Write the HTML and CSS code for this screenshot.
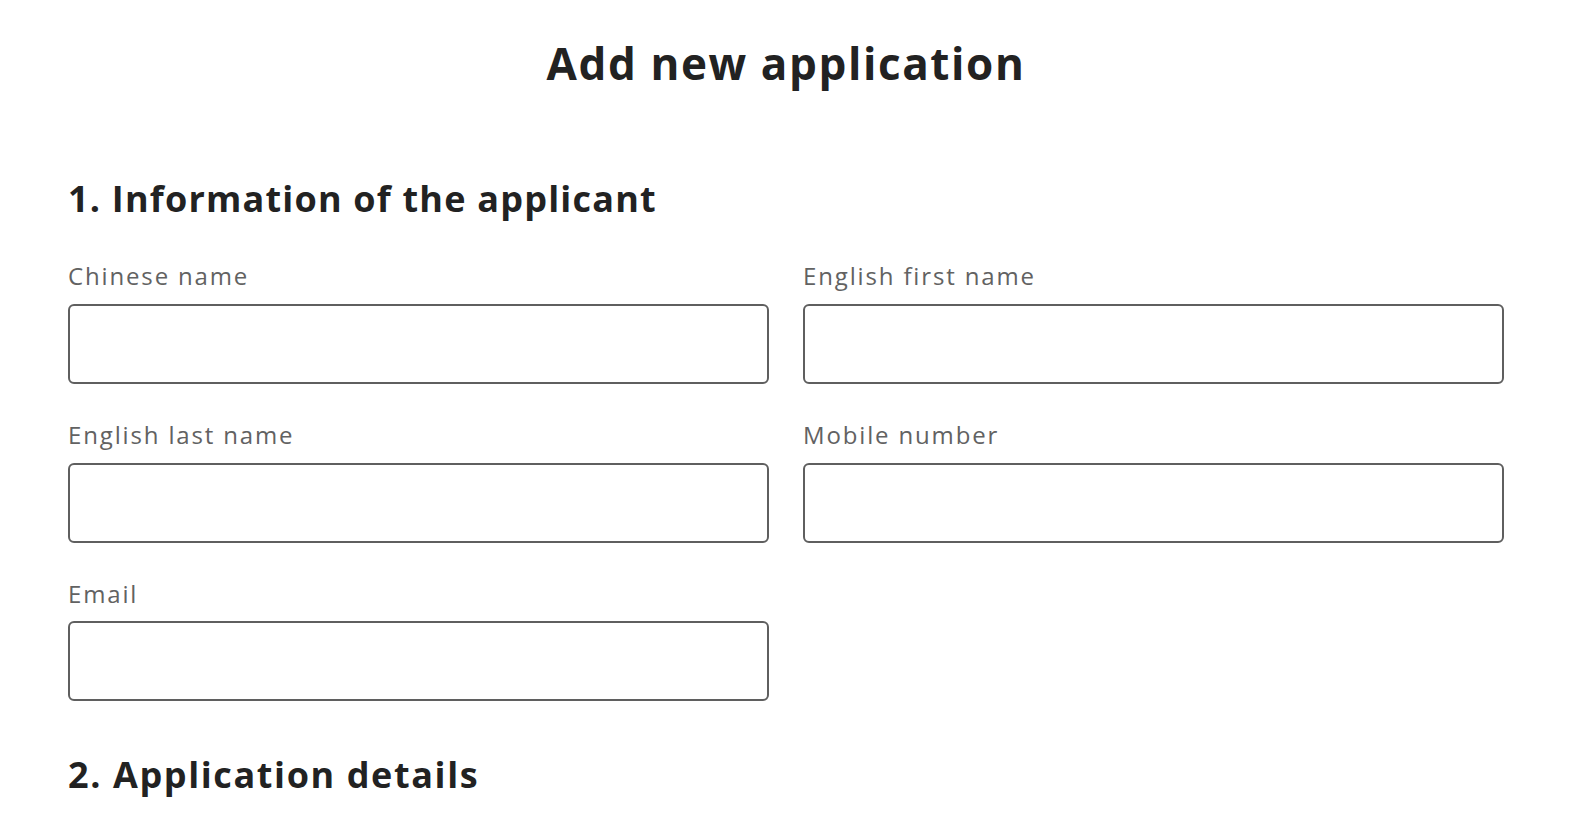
FILE: index.html
```html
<!DOCTYPE html>
<html lang="en">
<head>
    <meta charset="UTF-8">
    <meta name="viewport" content="width=device-width, initial-scale=1.0">
    <title>Add new application</title>
    <link rel="stylesheet" href="styles.css">
</head>
<body>
    <div class="page">
        <h1>Add new application</h1>
        <form id="applicationForm" action="" method="POST">
            <h2>1. Information of the applicant</h2>
            <div class="field-grid">
                <div class="field">
                    <label for="chineseName">Chinese name</label>
                    <input type="text" name="chineseName" id="chineseName">
                </div>
                <div class="field">
                    <label for="firstName">English first name</label>
                    <input type="text" name="firstName" id="firstName">
                </div>
                <div class="field">
                    <label for="lastName">English last name</label>
                    <input type="text" name="lastName" id="lastName">
                </div>
                <div class="field">
                    <label for="mobile">Mobile number</label>
                    <input type="tel" name="mobile" id="mobile">
                </div>
                <div class="field">
                    <label for="email">Email</label>
                    <input type="email" name="email" id="email">
                </div>
            </div>
            <h2 class="next-section">2. Application details</h2>
        </form>
    </div>
</body>
</html>
```

FILE: styles.css
```css
body {
    font-family: "Open Sans", "Noto Sans", sans-serif;
    margin: 0;
    background-color: #ffffff;
    color: #222222;
}
.page {
    padding: 37px 92px 0 68px;
}
h1 {
    text-align: center;
    font-size: 44px;
    line-height: 1.2;
    font-weight: 700;
    letter-spacing: 1.6px;
    margin: 0;
}
h2 {
    font-size: 36px;
    line-height: 1.2;
    font-weight: 700;
    letter-spacing: 1.2px;
    margin: 87px 0 42px;
}
h2.next-section {
    margin: 52px 0 0;
    letter-spacing: 1.6px;
}
.field-grid {
    display: grid;
    grid-template-columns: 1fr 1fr;
    column-gap: 34px;
    row-gap: 37px;
}
.field label {
    display: block;
    font-size: 24px;
    line-height: 1.2;
    letter-spacing: 1.85px;
    color: #626262;
    margin-bottom: 13px;
}
.field input {
    display: block;
    width: 100%;
    height: 80px;
    padding: 10px 16px;
    border: 2px solid #5f5f5f;
    border-radius: 6px;
    box-sizing: border-box;
    font-family: inherit;
    font-size: 24px;
}
```
